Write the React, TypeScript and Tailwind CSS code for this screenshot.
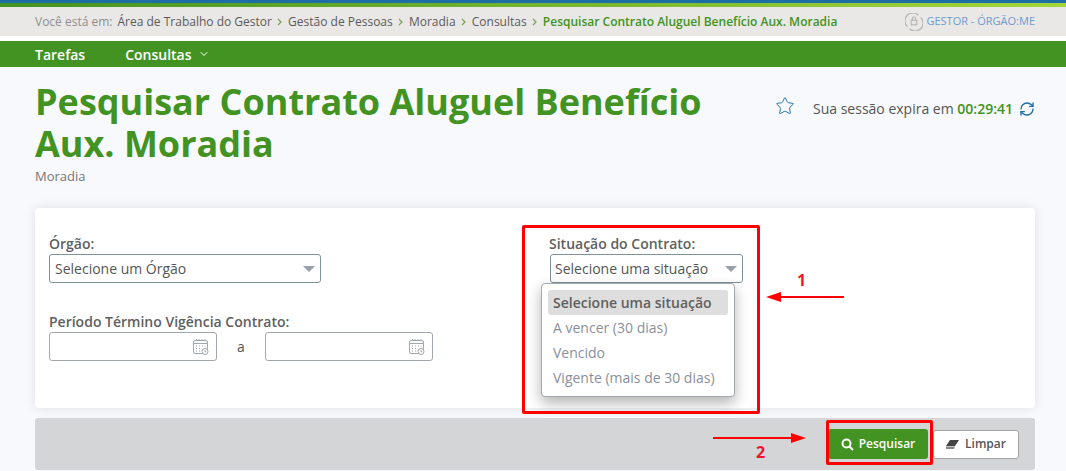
import { ChevronDown, Star, RefreshCw } from "lucide-react";

function Cal() {
  return (
    <svg width="16" height="18" viewBox="0 0 16 18" fill="none" stroke="#a3a8ae" strokeWidth="1">
      <rect x="0.5" y="2.5" width="14" height="13" rx="1.5" />
      <path d="M0.5 5.5h14" />
      <path d="M3.5 1v2M6 1v2M9 1v2M12 1v2" />
      <path d="M3 8h1M6 8h1M9 8h1M3 10.5h1M6 10.5h1M3 13h1M6 13h1" />
      <circle cx="12" cy="13.5" r="3" fill="#fff" />
      <path d="M12 12v1.6h1.2" />
    </svg>
  );
}

function Caret() {
  return <span className="w-0 h-0 border-x-[6px] border-x-transparent border-t-[6px] border-t-[#9aa0ab]" />;
}

function Sep() {
  return (
    <svg width="5" height="8" viewBox="0 0 5 8" fill="none" stroke="#7f9f5a" strokeWidth="1.2" className="mx-[5.6px]">
      <path d="M1 1l3 3-3 3" />
    </svg>
  );
}

export default function App() {
  return (
    <div className="relative w-[1066px] h-[471px] overflow-hidden bg-[#f7f9fc] font-['Open_Sans',sans-serif] text-[#555]">
      <div className="h-[3px] bg-[#1c6ea4]" />
      <div className="h-[4px] bg-gradient-to-r from-[#429321] to-[#a4d63c]" />
      <div className="h-[29px] bg-[#e9e8e6] flex items-center pl-[35px] pr-[31px] text-[12px] whitespace-nowrap">
        <span className="text-[#8f8f8f] mr-[5px]">Você está em:</span>
        <span className="text-[#5b5b5b]">Área de Trabalho do Gestor</span>
        <Sep />
        <span className="text-[#5b5b5b]">Gestão de Pessoas</span>
        <Sep />
        <span className="text-[#5b5b5b]">Moradia</span>
        <Sep />
        <span className="text-[#5b5b5b]">Consultas</span>
        <Sep />
        <span className="text-[#429321] font-semibold">Pesquisar Contrato Aluguel Benefício Aux. Moradia</span>
        <span className="ml-auto flex items-center gap-[3px] text-[#6d9bd1] text-[11px]">
          <svg width="18" height="18" viewBox="0 0 16 16" fill="none" stroke="#b5b5b5" strokeWidth="1">
            <path d="M2 12A7 7 0 0 1 12 2M14 4a7 7 0 0 1-10 10" />
            <rect x="5.5" y="6.5" width="5" height="4" />
            <path d="M6.5 6.5V5a1.5 1.5 0 0 1 3 0v1.5" />
          </svg>
          GESTOR - ÓRGÃO:ME
        </span>
      </div>
      <div className="h-[5px] bg-white" />
      <nav className="h-[26px] bg-[#429321] flex items-center pl-[35px] text-white text-[14px] font-semibold">
        <span>Tarefas</span>
        <span className="ml-[40px] flex items-center">
          Consultas
          <ChevronDown size={12} strokeWidth={2} className="ml-[6px]" />
        </span>
      </nav>
      <main className="px-[35px] pr-[31px]">
        <div className="flex items-start justify-between h-[141px]">
          <div className="pt-[14px] w-[700px]">
            <h1 className="text-[36px] leading-[42px] font-bold text-[#429321]">
              Pesquisar Contrato Aluguel Benefício Aux. Moradia
            </h1>
            <div className="text-[13px] leading-[16px] text-[#777] mt-[3px]">Moradia</div>
          </div>
          <div className="flex items-center mt-[31px] text-[14px]">
            <Star size={20} strokeWidth={1.2} className="text-[#2a78b0] mr-[18px] -mt-[5px]" />
            <span>
              Sua sessão expira em <b className="font-semibold text-[#429321]">00:29:41</b>
            </span>
            <RefreshCw size={16} strokeWidth={2} className="text-[#1c6ea4] ml-[6px]" />
          </div>
        </div>
        <section className="w-[1000px] h-[200px] bg-white rounded-[3px] shadow-[0_0_12px_rgba(0,0,0,0.1)] pl-[14px] pt-[26px] grid grid-cols-[500px_1fr] text-[14px]">
          <div>
            <label className="block leading-[20px] font-semibold text-[#606060]">Órgão:</label>
            <div className="w-[272px] h-[29px] border border-[#7f9298] rounded-[3px] flex items-center justify-between pl-[5px] pr-[5px]">
              Selecione um Órgão
              <Caret />
            </div>
            <label className="block leading-[20px] mt-[29px] font-semibold text-[#606060]">Período Término Vigência Contrato:</label>
            <div className="flex items-center">
              <div className="w-[168px] h-[29px] border border-[#a3a8ae] rounded-[3px] flex items-center justify-end pr-[7px]">
                <Cal />
              </div>
              <span className="w-[48px] text-center">a</span>
              <div className="w-[168px] h-[29px] border border-[#a3a8ae] rounded-[3px] flex items-center justify-end pr-[7px]">
                <Cal />
              </div>
            </div>
          </div>
          <div>
            <label className="block leading-[20px] font-semibold text-[#606060]">Situação do Contrato:</label>
            <div className="ml-[1px] w-[193px] h-[29px] border border-[#7f9298] rounded-[3px] flex items-center justify-between pl-[4px] pr-[5px]">
              Selecione uma situação
              <Caret />
            </div>
          </div>
        </section>
        <div className="mt-[10px] w-[1000px] h-[52px] bg-[#d4d5d7] rounded-[3px] flex items-center justify-end gap-[5px] pr-[16px]">
          <button className="w-[100px] h-[30px] bg-[#429321] rounded-[3px] text-white text-[12px] font-semibold flex items-center justify-center gap-[5px]">
            <svg width="13" height="13" viewBox="0 0 13 13" fill="none" stroke="#fff" strokeWidth="2">
              <circle cx="5.5" cy="5.5" r="4" />
              <path d="M8.5 8.5l3.5 3.5" />
            </svg>
            Pesquisar
          </button>
          <button className="w-[86px] h-[29px] bg-white border border-[#a3a3a3] rounded-[3px] text-[#555] text-[12px] font-semibold flex items-center justify-center gap-[6px]">
            <svg width="13" height="9" viewBox="0 0 13 9" fill="#444">
              <path d="M4 0h9L9 6H0z" />
              <path d="M0 6.5h9L8 9H0z" fill="#888" />
            </svg>
            Limpar
          </button>
        </div>
      </main>

      {/* dropdown open over the form */}
      <div className="absolute left-[541px] top-[283px] w-[194px] h-[114px] bg-white border border-[#a3a8ae] rounded-[4px] shadow-[0_6px_14px_rgba(0,0,0,0.3)] px-[6px] pt-[7px] text-[14px] leading-[25px] text-[#8a8f9c]">
        <div className="h-[25px] bg-[#dedede] rounded-[3px] px-[5px] text-[#606060] font-semibold -mt-px mb-px">Selecione uma situação</div>
        <div className="h-[25px] px-[5px] -mt-px mb-px">A vencer (30 dias)</div>
        <div className="h-[25px] px-[5px] -mt-px mb-px">Vencido</div>
        <div className="h-[25px] px-[5px] -mt-px mb-px">Vigente (mais de 30 dias)</div>
      </div>

      {/* red annotations */}
      <div className="absolute left-[522px] top-[225px] w-[238px] h-[189px] border-[3px] border-[#fe0000] rounded-[2px]" />
      <div className="absolute left-[826px] top-[420px] w-[107px] h-[45px] border-[3px] border-[#fe0000] rounded-[2px]" />
      <svg className="absolute left-[765px] top-[290px]" width="80" height="14" viewBox="0 0 80 14">
        <path d="M1 7 L16 2 V6 H79 V8 H16 V12 Z" fill="#fe0000" />
      </svg>
      <svg className="absolute left-[712px] top-[431px]" width="95" height="14" viewBox="0 0 95 14">
        <path d="M94 7 L79 2 V6 H1 V8 H79 V12 Z" fill="#fe0000" />
      </svg>
      <span className="absolute left-[797px] top-[270px] text-[#f0142f] text-[16px] leading-[20px] font-bold">1</span>
      <span className="absolute left-[756px] top-[442px] text-[#f0142f] text-[16px] leading-[20px] font-bold">2</span>
    </div>
  );
}
